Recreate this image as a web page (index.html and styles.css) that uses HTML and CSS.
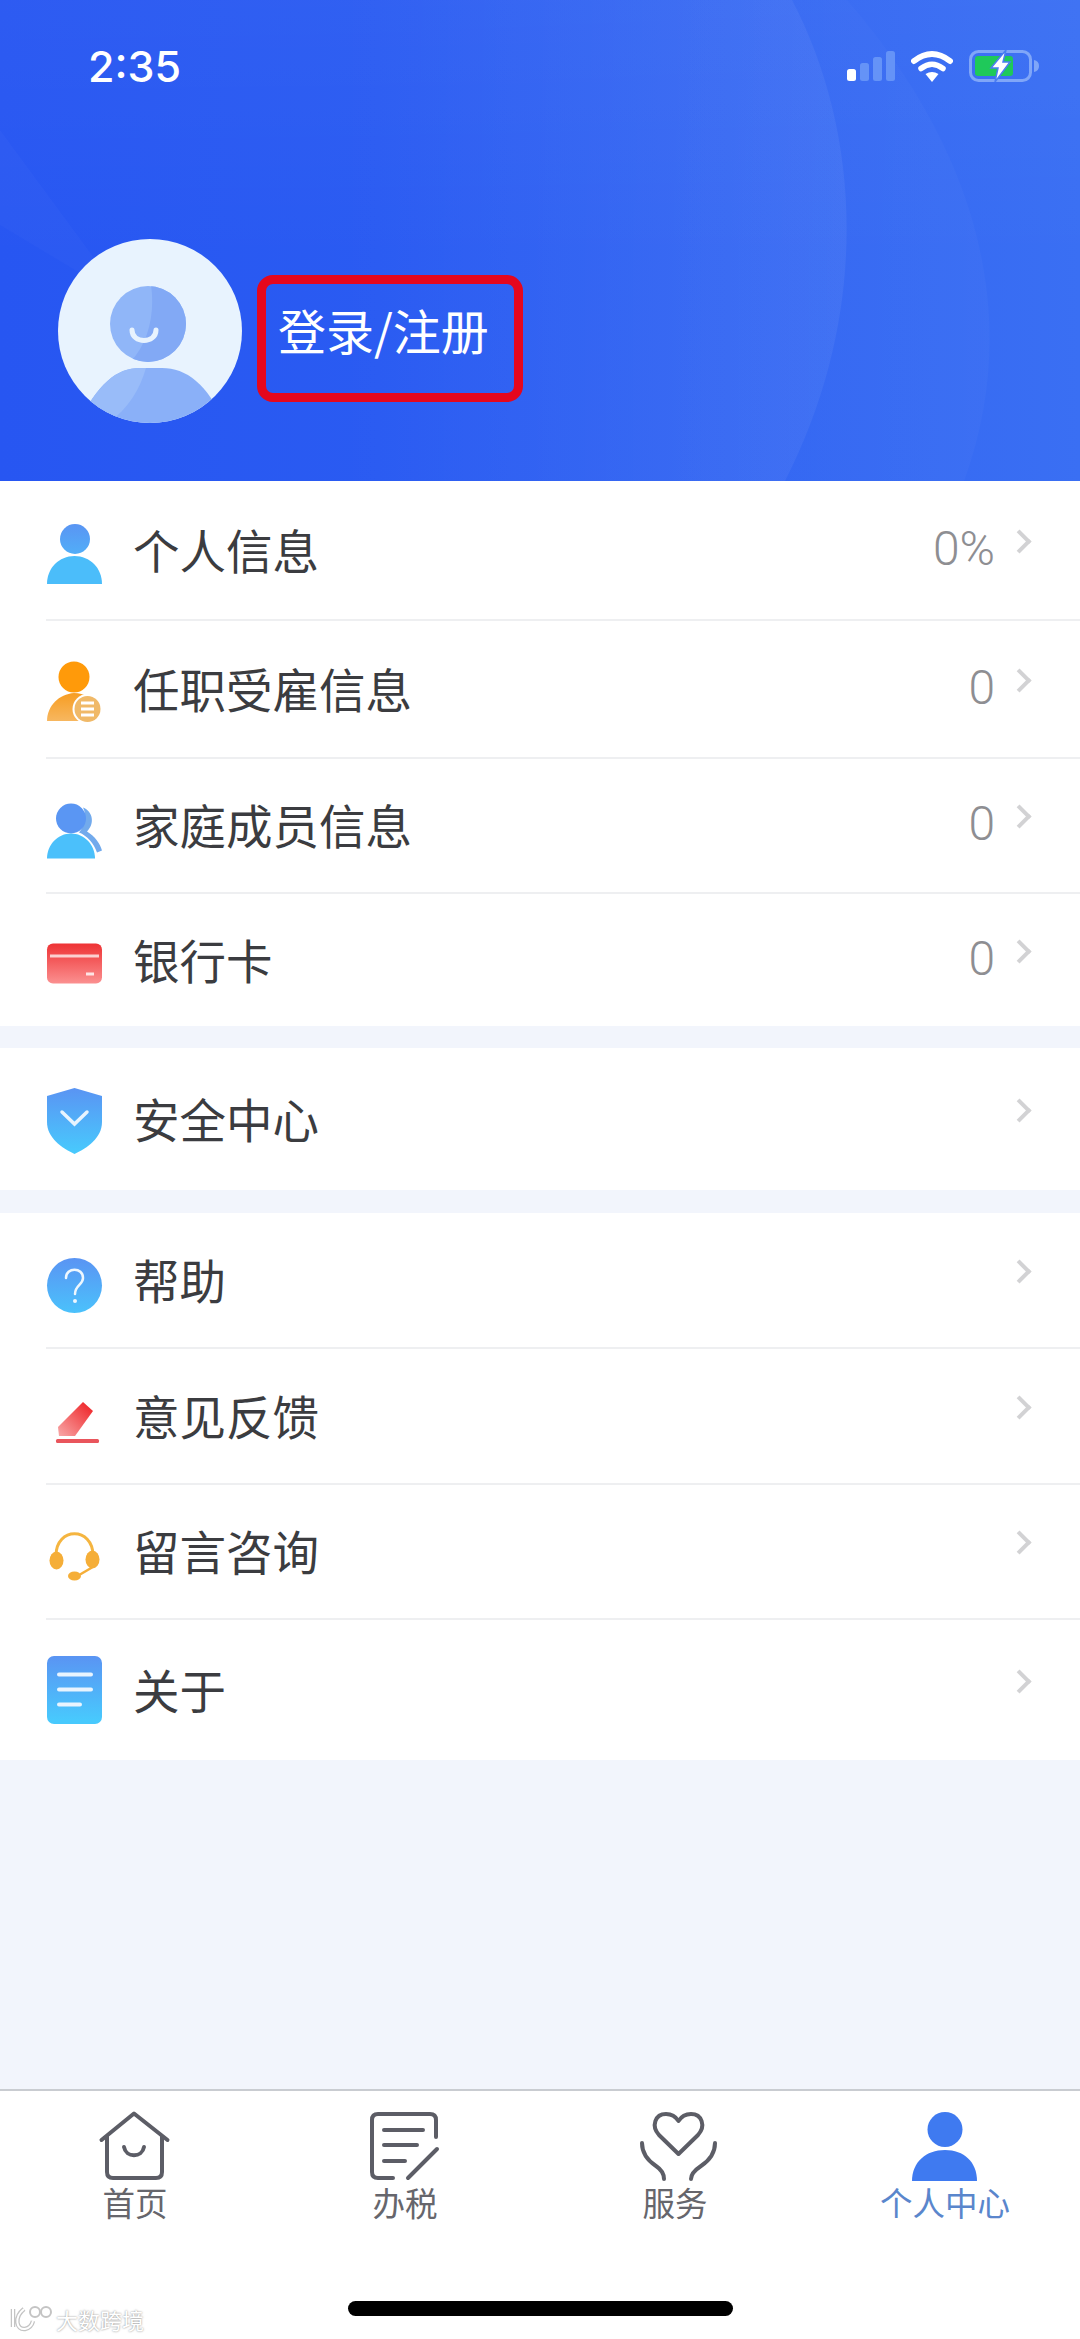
FILE: index.html
```html
<!DOCTYPE html>
<html>
<head>
    <title>个人中心</title>
    <link rel="stylesheet" href="styles.css">
</head>
<body>
    <svg class="defs">
        <defs>
            <linearGradient id="blue" gradientUnits="userSpaceOnUse" x1="0" y1="0" x2="0" y2="64">
                <stop offset="0" stop-color="#5a94f3"/>
                <stop offset="1" stop-color="#48c9fd"/>
            </linearGradient>
            <linearGradient id="orange" gradientUnits="userSpaceOnUse" x1="0" y1="30" x2="0" y2="60">
                <stop offset="0" stop-color="#f79c20"/>
                <stop offset="1" stop-color="#f7b862"/>
            </linearGradient>
            <linearGradient id="red" x1="0" y1="0" x2="0" y2="1">
                <stop offset="0" stop-color="#ee3234"/>
                <stop offset="1" stop-color="#fb9090"/>
            </linearGradient>
            <linearGradient id="pen" x1="1" y1="0" x2="0" y2="1">
                <stop offset="0" stop-color="#ee1c20"/>
                <stop offset="1" stop-color="#f8a8a8"/>
            </linearGradient>
            <linearGradient id="shineA" gradientUnits="userSpaceOnUse" x1="330" y1="0" x2="860" y2="0">
                <stop offset="0" stop-color="#fff" stop-opacity="0"/>
                <stop offset="1" stop-color="#fff" stop-opacity="0.055"/>
            </linearGradient>
            <linearGradient id="shineB" gradientUnits="userSpaceOnUse" x1="640" y1="0" x2="1000" y2="0">
                <stop offset="0" stop-color="#fff" stop-opacity="0"/>
                <stop offset="1" stop-color="#fff" stop-opacity="0.025"/>
            </linearGradient>
            <clipPath id="avatarClip"><circle cx="92" cy="92" r="92"/></clipPath>
            <clipPath id="headClip"><circle cx="90" cy="85" r="38"/></clipPath>
        </defs>
    </svg>

    <header class="top">
        <!-- curved light bands behind the header -->
        <svg class="top-bg" viewBox="0 0 1080 481" preserveAspectRatio="none">
            <path d="M0 0H792C860 130 872 310 785 481H0Z" fill="url(#shineA)"/>
            <path d="M847 0C960 130 1030 300 964 481H0V0Z" fill="url(#shineB)"/>
            <path d="M0 130L125 300L0 225Z" fill="#fff" fill-opacity="0.02"/>
        </svg>

        <div class="status">
            <span class="time">2:35</span>
            <div class="status-icons">
                <svg width="48" height="32" viewBox="0 0 48 32">
                    <rect x="0" y="19" width="9" height="12" rx="2.5" fill="#fff"/>
                    <rect x="13" y="13" width="9" height="18" rx="2.5" fill="#6593f7"/>
                    <rect x="26" y="7" width="9" height="24" rx="2.5" fill="#6593f7"/>
                    <rect x="39" y="1" width="9" height="30" rx="2.5" fill="#6593f7"/>
                </svg>
                <svg width="42" height="32" viewBox="0 0 42 32">
                    <path d="M3 11Q21 -3 39 11" fill="none" stroke="#fff" stroke-width="6" stroke-linecap="round"/>
                    <path d="M10 18.500Q21 10 32 18.500" fill="none" stroke="#fff" stroke-width="5.500" stroke-linecap="round"/>
                    <path d="M14.500 24L21 32L27.500 24Q21 20 14.500 24Z" fill="#fff"/>
                </svg>
                <svg width="71" height="32" viewBox="0 0 71 32">
                    <rect x="1.500" y="1.500" width="60" height="29" rx="8" fill="none" stroke="#80a6f8" stroke-width="3"/>
                    <rect x="6" y="6" width="38" height="20" rx="3" fill="#1fc95a"/>
                    <path d="M65 10Q70 11 70 16Q70 21 65 22Z" fill="#80a6f8"/>
                    <path d="M37 0L22 18H29L26 32L41 12H34Z" fill="#fff" stroke="#4a7df2" stroke-width="1.500"/>
                </svg>
            </div>
        </div>

        <div class="profile">
            <svg class="avatar" viewBox="0 0 184 184">
                <circle cx="92" cy="92" r="92" fill="#e8f3fe"/>
                <circle cx="90" cy="85" r="38" fill="#90b6f8"/>
                <path d="M92 40C98 70 92 105 70 125H130V40Z" fill="#82a9f5" clip-path="url(#headClip)"/>
                <path d="M72 91C72 105 96 105 96 91" transform="translate(2 0)" fill="none" stroke="#e8f3fe" stroke-width="5" stroke-linecap="round"/>
                <g clip-path="url(#avatarClip)">
                    <path d="M20 184C40 145 58 129 82 129H104C128 129 150 145 166 184Z" fill="#8ab0f8"/>
                    <path d="M20 184C40 145 58 129 82 129H88C82 150 70 170 50 184Z" fill="#99bcf9"/>
                </g>
            </svg>
            <div class="login"><span>登录/注册</span></div>
        </div>
    </header>

    <main class="groups">
        <section class="group group-info">
            <div class="row">
                <svg class="icon" viewBox="0 -4 55 64">
                    <circle cx="28" cy="16" r="15" fill="url(#blue)"/>
                    <path d="M0 61C0 45 12 33 27.500 33C43 33 55 45 55 61Z" fill="#4bbdfa"/>
                </svg>
                <div class="row-body"><span class="title">个人信息</span><span class="value">0%</span><i class="chevron"></i></div>
            </div>
            <div class="row">
                <svg class="icon" viewBox="0 -4 55 64">
                    <circle cx="27" cy="15" r="15.500" fill="#ff9a0a"/>
                    <path d="M0 59C0 44 12 32 27 31C38 31 44 36 48 44V59Z" fill="url(#orange)"/>
                    <circle cx="40.500" cy="47" r="15" fill="#fff"/>
                    <circle cx="40.500" cy="47" r="13" fill="#f0b968"/>
                    <path d="M34 41H47M34 47H47M34 53H47" stroke="#fff" stroke-width="3"/>
                </svg>
                <div class="row-body"><span class="title">任职受雇信息</span><span class="value">0</span><i class="chevron"></i></div>
            </div>
            <div class="row">
                <svg class="icon" viewBox="0 -4.500 55 55">
                    <path d="M36 4C46 8 48 20 40 28C48 33 53 40 55 47L50 49C47 40 40 32 32 29C38 22 40 12 36 4Z" fill="#72aaec"/>
                    <circle cx="24" cy="15" r="15" fill="#5a96f3"/>
                    <path d="M0 55C0 41 11 30 24 30C37 30 48 41 48 55Z" fill="#4bc0fb"/>
                </svg>
                <div class="row-body"><span class="title">家庭成员信息</span><span class="value">0</span><i class="chevron"></i></div>
            </div>
            <div class="row">
                <svg class="icon" viewBox="0 -3.500 55 40">
                    <rect width="55" height="40" rx="6" fill="url(#red)"/>
                    <rect x="3" y="11" width="49" height="3" fill="#fbd0d0"/>
                    <rect x="39" y="29" width="8" height="3" fill="#fde5e5"/>
                </svg>
                <div class="row-body"><span class="title">银行卡</span><span class="value">0</span><i class="chevron"></i></div>
            </div>
        </section>

        <section class="group group-safe">
            <div class="row">
                <svg class="icon" viewBox="0 -2 55 66">
                    <path d="M27.500 0L55 8V34C55 50 40 60 27.500 66C15 60 0 50 0 34V8Z" fill="url(#blue)"/>
                    <path d="M15 24L27.500 36L40 24" fill="none" stroke="#e8f4fe" stroke-width="3.500" stroke-linecap="round"/>
                </svg>
                <div class="row-body"><span class="title">安全中心</span><i class="chevron"></i></div>
            </div>
        </section>

        <section class="group group-help">
            <div class="row">
                <svg class="icon" viewBox="0 -4 55 55">
                    <circle cx="27.500" cy="27.500" r="27.500" fill="url(#blue)"/>
                    <path d="M19 20C19 9 36 9 36 20C36 27 28 27 28 36" fill="none" stroke="#eef7fe" stroke-width="2.500" stroke-linecap="round"/>
                    <circle cx="28" cy="43" r="2" fill="#eef7fe"/>
                </svg>
                <div class="row-body"><span class="title">帮助</span><i class="chevron"></i></div>
            </div>
            <div class="row">
                <svg class="icon" viewBox="0 -6 55 44">
                    <path d="M11 26L36 1L46 10L28 35H12Z" fill="url(#pen)"/>
                    <rect x="9" y="38" width="43" height="4" rx="1.500" fill="#e9555c"/>
                </svg>
                <div class="row-body"><span class="title">意见反馈</span><i class="chevron"></i></div>
            </div>
            <div class="row">
                <svg class="icon" viewBox="0 -5.500 55 50">
                    <path d="M9 22C9 -7 46 -7 46 22" fill="none" stroke="#f5b540" stroke-width="3"/>
                    <ellipse cx="9.500" cy="27" rx="7" ry="9" fill="#f5ae38"/>
                    <ellipse cx="45.500" cy="26" rx="7" ry="9" fill="#f5ae38"/>
                    <path d="M45 34L33 41" stroke="#f5ae38" stroke-width="2.500"/>
                    <ellipse cx="27.500" cy="42.500" rx="6.500" ry="4.500" fill="#f5ae38"/>
                </svg>
                <div class="row-body"><span class="title">留言咨询</span><i class="chevron"></i></div>
            </div>
            <div class="row">
                <svg class="icon" viewBox="0 0 55 68">
                    <rect width="55" height="68" rx="7" fill="url(#blue)"/>
                    <path d="M12 18.500H44M12 33.500H44M12 48.500H33" stroke="#e8f4fe" stroke-width="4" stroke-linecap="round"/>
                </svg>
                <div class="row-body"><span class="title">关于</span><i class="chevron"></i></div>
            </div>
        </section>
    </main>

    <footer class="tabbar">
        <nav class="tabs">
            <a class="tab">
                <svg class="tab-icon" viewBox="-5 0 84 72">
                    <path d="M3.500 30L36 3.500L69.500 30M9 26V62Q9 68 15 68H58Q64 68 64 62V26M26 37C28 48 44 48 46 37" fill="none" stroke="#5c5d66" stroke-width="4" stroke-linecap="round" stroke-linejoin="round"/>
                </svg>
                <span>首页</span>
            </a>
            <a class="tab">
                <svg class="tab-icon" viewBox="-6 0 84 72">
                    <path d="M24 68H9Q3 68 3 62V10Q3 4 9 4H61Q67 4 67 10V27M15 20H54M15 35H48M15 51H36M39 68L68 39" fill="none" stroke="#5c5d66" stroke-width="4" stroke-linecap="round"/>
                </svg>
                <span>办税</span>
            </a>
            <a class="tab">
                <svg class="tab-icon" viewBox="-6 0 84 72">
                    <path d="M39.500 44L20 25C12 16 16 4 27 4C33 4 37 7 39.500 11C42 7 46 4 52 4C63 4 67 16 59 25ZM3 33C3 45 11 52 17 56C23 60 25 64 25 69M76 33C76 45 68 52 62 56C56 60 52 64 52 69" fill="none" stroke="#5c5d66" stroke-width="4" stroke-linecap="round" stroke-linejoin="round"/>
                </svg>
                <span>服务</span>
            </a>
            <a class="tab tab-active">
                <svg class="tab-icon" viewBox="-6 0 84 72">
                    <circle cx="36" cy="19.500" r="17.500" fill="#3f7af0"/>
                    <path d="M3 71C3 52 17 40 36 40C55 40 68 52 68 71Z" fill="#3f7af0"/>
                </svg>
                <span>个人中心</span>
            </a>
        </nav>
        <div class="home-bar"></div>
    </footer>

    <div class="watermark">
        <svg width="46" height="28" viewBox="0 0 46 28">
            <path d="M5 4V22M16 4C6 12 8 25 17 24C22 23 24 20 25 16" fill="none" stroke="#c4c4c4" stroke-width="4.500"/>
            <path d="M5 4V22M16 4C6 12 8 25 17 24C22 23 24 20 25 16" fill="none" stroke="#fff" stroke-width="2"/>
            <circle cx="27" cy="7" r="5" fill="#fff" stroke="#c4c4c4" stroke-width="2"/>
            <circle cx="38" cy="7" r="5" fill="#fff" stroke="#c4c4c4" stroke-width="2"/>
        </svg>
        <span>大数跨境</span>
    </div>
</body>
</html>
```

FILE: styles.css
```css
html, body {
    margin: 0;
    padding: 0;
}

body {
    position: relative;
    display: flex;
    flex-direction: column;
    width: 1080px;
    height: 2339px;
    overflow: hidden;
    font-family: "Noto Sans CJK SC", "Noto Sans", sans-serif;
    background-color: #f2f5fc;
    color: #3b3c40;
}

.defs {
    position: absolute;
    width: 0;
    height: 0;
}

/* header */
.top {
    position: relative;
    height: 481px;
    box-sizing: border-box;
    padding-top: 50px;
    background:
        linear-gradient(180deg, rgba(255, 255, 255, 0.03) 0%, rgba(255, 255, 255, 0) 55%),
        linear-gradient(90deg, #2756f2 0%, #2a5bf2 35%, #3a6ff3 100%);
    color: #fff;
}

.top-bg {
    position: absolute;
    top: 0;
    left: 0;
    width: 100%;
    height: 100%;
}

.status {
    position: relative;
    display: flex;
    justify-content: space-between;
    align-items: center;
    height: 32px;
    padding: 0 40px 0 88px;
}

.time {
    font-family: Inter, "Liberation Sans", sans-serif;
    font-size: 43px;
    font-weight: 500;
    line-height: 32px;
}

.status-icons {
    display: flex;
    align-items: center;
    gap: 16px;
}

.profile {
    position: relative;
    display: flex;
    align-items: flex-start;
    margin-top: 157px;
    padding-left: 58px;
}

.avatar {
    width: 184px;
    height: 184px;
}

.login {
    box-sizing: border-box;
    width: 266px;
    height: 127px;
    margin: 36px 0 0 15px;
    padding: 13px 0 0 12px;
    border: 9px solid #e5071d;
    border-radius: 16px;
    font-size: 48px;
    line-height: 64px;
    white-space: nowrap;
}

/* list */
.groups {
    flex: 1;
    display: flex;
    flex-direction: column;
    gap: 22px;
}

.group {
    display: grid;
    background-color: #fff;
}

.group-info {
    grid-template-rows: 140px 138px 135px 132px;
}

.group-safe {
    grid-template-rows: 142px;
}

.group-help {
    grid-template-rows: 136px 136px 135px 140px;
    margin-top: 1px;
}

.row {
    display: flex;
    align-items: center;
    padding-left: 47px;
}

.icon {
    flex: none;
    width: 55px;
    margin-right: 32px;
    overflow: visible;
}

.row-body {
    flex: 1;
    display: flex;
    align-items: center;
    align-self: stretch;
    margin-left: -88px;
    padding: 0 48px 0 87px;
    border-bottom: 2px solid #eeeff1;
}

.row:last-child .row-body {
    border-bottom: none;
}

.title {
    flex: 1;
    margin-bottom: 4px;
    font-size: 46.5px;
}

.value {
    margin: 0 16px 4px 0;
    font-family: Roboto, "Liberation Sans", sans-serif;
    font-size: 48px;
    font-weight: 300;
    color: #8e8e92;
}

.chevron {
    width: 13px;
    height: 13px;
    margin: 0 4px 18px 0;
    border-top: 4px solid #d2d2d4;
    border-right: 4px solid #d2d2d4;
    transform: rotate(45deg);
}

/* bottom bar */
.tabbar {
    height: 250px;
    box-sizing: border-box;
    padding-top: 19px;
    border-top: 2px solid #c9ccd1;
    background-color: #fff;
}

.tabs {
    display: grid;
    grid-template-columns: repeat(4, 1fr);
}

.tab {
    display: flex;
    flex-direction: column;
    align-items: center;
    height: 119px;
    font-size: 32.5px;
    line-height: 40px;
    color: #66666c;
}

.tab-active {
    color: #5a86cc;
}

.tab-icon {
    flex: none;
    width: 84px;
    height: 72px;
}

.home-bar {
    width: 385px;
    height: 15px;
    margin: 72px auto 0;
    border-radius: 8px;
    background-color: #000;
}

.watermark {
    position: absolute;
    left: 8px;
    bottom: 6px;
    display: flex;
    align-items: center;
    gap: 2px;
    font-size: 22px;
    line-height: 28px;
    color: #fff;
    text-shadow: 0 0 2px #7d7d7d;
}
```
